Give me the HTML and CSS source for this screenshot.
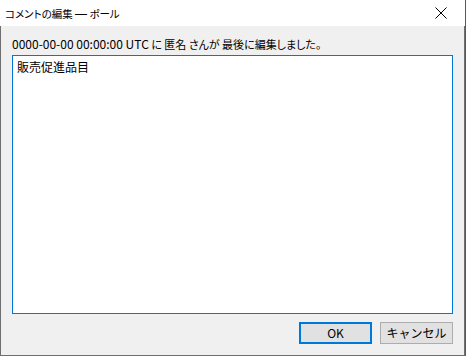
FILE: index.html
```html
<!DOCTYPE html>
<html lang="ja">

<head>
    <meta charset="UTF-8">
    <title>コメントの編集 — ポール</title>
    <link rel="stylesheet" href="styles.css">
</head>

<body>
    <div class="dialog">
        <div class="titlebar">
            <span class="titlebar__text">コメントの編集 <span class="titlebar__dash">—</span> ポール</span>
            <svg class="titlebar__close" width="12" height="12" viewBox="0 0 12 12">
                <path d="M0.5 0.5 L11.5 11.5 M11.5 0.5 L0.5 11.5" stroke="#000" stroke-width="1" fill="none" />
            </svg>
        </div>

        <div class="dialog__body">
            <div class="edit-info"><span class="edit-info__time">0000-00-00 00:00:00 UTC</span> に 匿名 さんが 最後に編集しました。</div>
            <div class="comment-box">販売促進品目</div>
            <div class="buttons">
                <button class="btn btn--default">OK</button>
                <button class="btn">キャンセル</button>
            </div>
        </div>
    </div>
</body>

</html>
```
FILE: styles.css
```css
html {
    box-sizing: border-box;
}

*,
*:before,
*:after {
    box-sizing: inherit;
}

body {
    margin: 0;
    width: 466px;
    height: 356px;
    background: #5a5a5a;
    font-family: "Noto Sans CJK JP", "Noto Sans", sans-serif;
    font-size: 12px;
    font-feature-settings: "palt";
    color: #000;
}

.dialog {
    width: 465px;
    height: 356px;
    display: flex;
    flex-direction: column;
}

.titlebar {
    height: 26px;
    background: #fff;
    display: flex;
    align-items: center;
    justify-content: space-between;
    padding: 0 18px 0 5px;
}

.titlebar__text {
    font-size: 10.5px;
    color: #000;
}

.titlebar__dash {
    font-family: "Liberation Sans", sans-serif;
    font-size: 12px;
}

.titlebar__close {
    display: block;
}

.dialog__body {
    flex: 1;
    background: #f0f0f0;
    border: 1px solid #6f6f6f;
    border-top: none;
    padding: 8px 11px 11px 11px;
    display: flex;
    flex-direction: column;
}

.edit-info {
    height: 21px;
    line-height: 20px;
    font-size: 11px;
}

.edit-info__time {
    font-size: 12px;
}

.comment-box {
    height: 259px;
    background: #fff;
    border: 1px solid #0078d7;
    padding: 3px 4px;
    line-height: 16px;
    font-feature-settings: normal;
}

.buttons {
    display: flex;
    justify-content: flex-end;
    gap: 8px;
    margin-top: 8px;
}

.btn {
    width: 73px;
    height: 22px;
    padding: 0;
    background: #e1e1e1;
    border: 1px solid #adadad;
    font-family: inherit;
    font-size: 12px;
    color: #000;
    line-height: 18px;
}

.btn--default {
    border: 2px solid #0078d7;
}
```
